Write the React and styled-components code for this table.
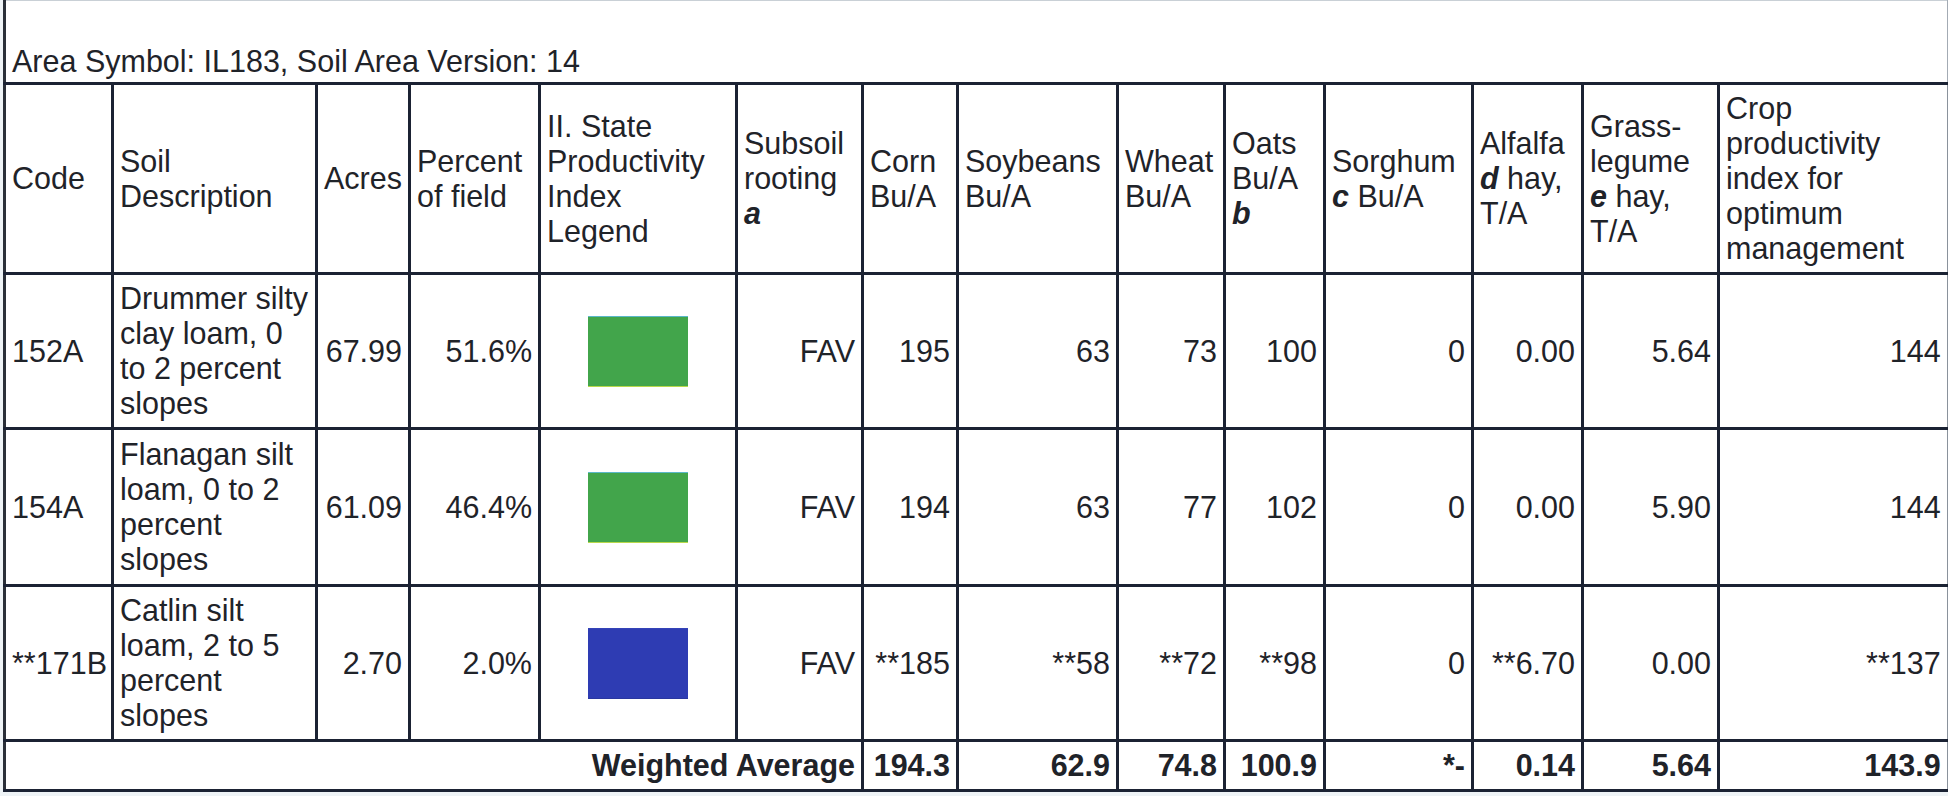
import React from "react";
import styled, { createGlobalStyle } from "styled-components";

const GlobalStyle = createGlobalStyle`
  html, body {
    margin: 0;
    padding: 0;
    background: #eef3f6;
  }
  body {
    font-family: "Liberation Sans", Arial, sans-serif;
    color: #1f2329;
  }
`;

const Page = styled.div`
  width: 1948px;
  height: 796px;
  box-sizing: border-box;
  padding-left: 3px;
  overflow: hidden;
`;

const Table = styled.table`
  border-collapse: collapse;
  table-layout: fixed;
  width: 1943px;
  background: #ffffff;
  font-size: 30.5px;
  line-height: 35px;
`;

const Row = styled.tr`
  height: ${(p) => p.$h}px;
`;

const Cell = styled.td`
  border: 3px solid #1b2233;
  padding: 0 6px;
  vertical-align: middle;
  text-align: ${(p) => p.$align || "left"};
  white-space: nowrap;
  font-weight: ${(p) => (p.$bold ? 700 : 400)};
  overflow: visible;
  &:first-child {
    border-left: 3px solid #2a2f38;
  }
  &:last-child {
    border-right: 2px solid #8a929c;
  }
`;

const HeadCell = styled(Cell).attrs({ as: "th" })`
  text-align: left;
  font-weight: 400;
`;

const AreaCell = styled.td`
  border-top: 1px solid #c9d0d6;
  border-left: 3px solid #2a2f38;
  border-right: 2px solid #a3abb4;
  border-bottom: 3px solid #1b2233;
  padding: 0 6px 3px 6px;
  vertical-align: bottom;
  text-align: left;
  white-space: nowrap;
`;

const Note = styled.b`
  font-style: italic;
  font-weight: 700;
`;

const Swatch = styled.div`
  width: 100px;
  height: 71px;
  margin: 0 auto;
  background: ${(p) => p.$color};
  border-top: 1px solid ${(p) => p.$top};
  border-bottom: 1px solid ${(p) => p.$bottom};
  box-sizing: border-box;
`;

const widths = [108, 204, 93, 130, 197, 126, 95, 160, 107, 100, 148, 110, 136, 229];

const rows = [
  {
    code: "152A",
    desc: ["Drummer silty", "clay loam, 0", "to 2 percent", "slopes"],
    acres: "67.99",
    pct: "51.6%",
    color: "#42a54b",
    top: "#5bb8c8",
    bottom: "#b8d84a",
    vals: ["FAV", "195", "63", "73", "100", "0", "0.00", "5.64", "144"],
    h: 155,
  },
  {
    code: "154A",
    desc: ["Flanagan silt", "loam, 0 to 2", "percent", "slopes"],
    acres: "61.09",
    pct: "46.4%",
    color: "#42a54b",
    top: "#5bb8c8",
    bottom: "#b8d84a",
    vals: ["FAV", "194", "63", "77", "102", "0", "0.00", "5.90", "144"],
    h: 157,
  },
  {
    code: "**171B",
    desc: ["Catlin silt", "loam, 2 to 5", "percent", "slopes"],
    acres: "2.70",
    pct: "2.0%",
    color: "#2e3cb3",
    top: "#3443b8",
    bottom: "#2a379f",
    vals: ["FAV", "**185", "**58", "**72", "**98", "0", "**6.70", "0.00", "**137"],
    h: 155,
  },
];

const totals = ["194.3", "62.9", "74.8", "100.9", "*-", "0.14", "5.64", "143.9"];

const Lines = ({ items }) =>
  items.map((t, i) => (
    <React.Fragment key={i}>
      {i > 0 && <br />}
      {t}
    </React.Fragment>
  ));

export default function App() {
  return (
    <>
      <GlobalStyle />
      <Page>
        <Table>
          <colgroup>
            {widths.map((w, i) => (
              <col key={i} style={{ width: w }} />
            ))}
          </colgroup>
          <tbody>
            <Row $h={83}>
              <AreaCell colSpan={14}>Area Symbol: IL183, Soil Area Version: 14</AreaCell>
            </Row>
            <Row $h={190}>
              <HeadCell>Code</HeadCell>
              <HeadCell>
                Soil
                <br />
                Description
              </HeadCell>
              <HeadCell>Acres</HeadCell>
              <HeadCell>
                Percent
                <br />
                of field
              </HeadCell>
              <HeadCell>
                II. State
                <br />
                Productivity
                <br />
                Index
                <br />
                Legend
              </HeadCell>
              <HeadCell>
                Subsoil
                <br />
                rooting
                <br />
                <Note>a</Note>
              </HeadCell>
              <HeadCell>
                Corn
                <br />
                Bu/A
              </HeadCell>
              <HeadCell>
                Soybeans
                <br />
                Bu/A
              </HeadCell>
              <HeadCell>
                Wheat
                <br />
                Bu/A
              </HeadCell>
              <HeadCell>
                Oats
                <br />
                Bu/A
                <br />
                <Note>b</Note>
              </HeadCell>
              <HeadCell>
                Sorghum
                <br />
                <Note>c</Note> Bu/A
              </HeadCell>
              <HeadCell>
                Alfalfa
                <br />
                <Note>d</Note> hay,
                <br />
                T/A
              </HeadCell>
              <HeadCell>
                Grass-
                <br />
                legume
                <br />
                <Note>e</Note> hay,
                <br />
                T/A
              </HeadCell>
              <HeadCell>
                Crop
                <br />
                productivity
                <br />
                index for
                <br />
                optimum
                <br />
                management
              </HeadCell>
            </Row>
            {rows.map((r) => (
              <Row key={r.code} $h={r.h}>
                <Cell>{r.code}</Cell>
                <Cell>
                  <Lines items={r.desc} />
                </Cell>
                <Cell $align="right">{r.acres}</Cell>
                <Cell $align="right">{r.pct}</Cell>
                <Cell $align="center">
                  <Swatch $color={r.color} $top={r.top} $bottom={r.bottom} />
                </Cell>
                {r.vals.map((v, i) => (
                  <Cell key={i} $align="right">
                    {v}
                  </Cell>
                ))}
              </Row>
            ))}
            <Row $h={50}>
              <Cell colSpan={6} $align="right" $bold>
                Weighted Average
              </Cell>
              {totals.map((v, i) => (
                <Cell key={i} $align="right" $bold>
                  {v}
                </Cell>
              ))}
            </Row>
          </tbody>
        </Table>
      </Page>
    </>
  );
}
